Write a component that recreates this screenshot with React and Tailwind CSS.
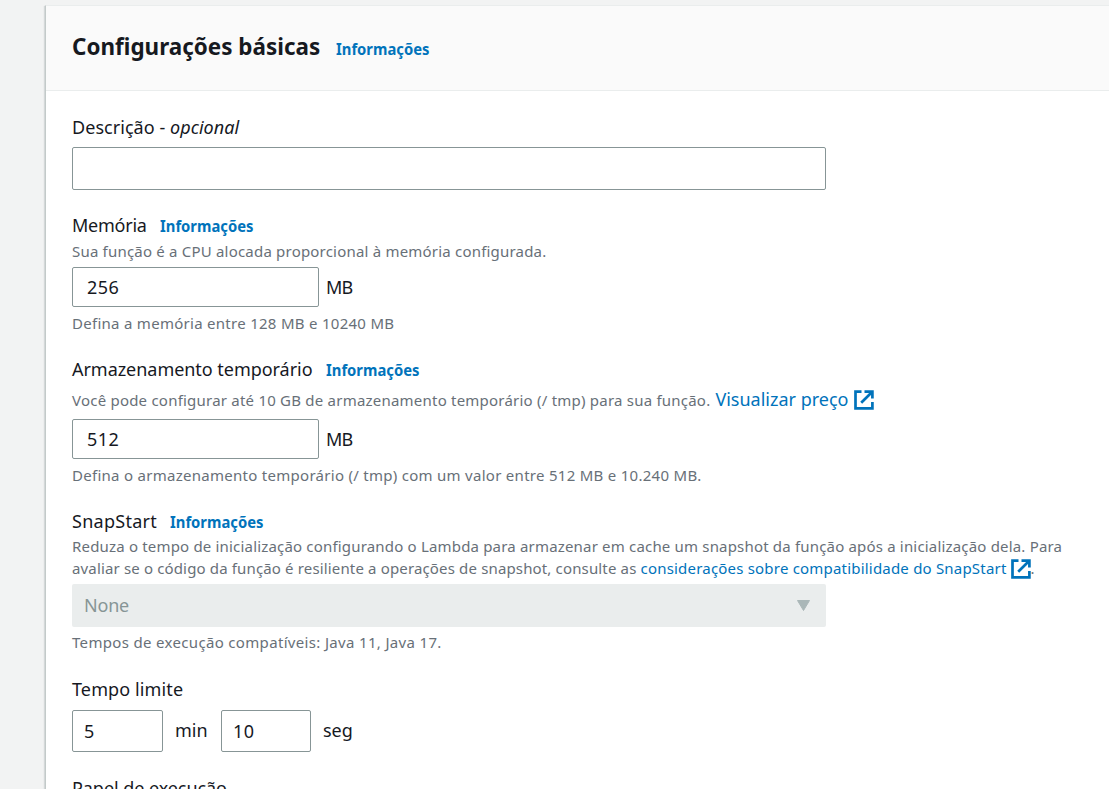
const Info = ({ className = "" }) => (
  <a className={`-mr-2 inline-block origin-left scale-x-[0.925] font-bold text-[#0073bb] text-[16px] leading-[25px] whitespace-nowrap ${className}`}>Informações</a>
);
const Label = ({ children, className = "" }) => (
  <div className={`flex h-[25px] items-center gap-[13px] leading-[25px] whitespace-nowrap ${className}`}>{children}</div>
);
const Hint = ({ children, className = "" }) => (
  <p className={`text-[#687078] text-[15px] leading-[22px] whitespace-nowrap ${className}`}>{children}</p>
);
const External = ({ className = "" }) => (
  <svg viewBox="0 0 20 20" className={`inline-block h-5 w-5 shrink-0 ${className}`} fill="none" stroke="currentColor" strokeWidth="2.7">
    <path d="M7.5 1.6H1.5V18.4H18.4V12M10.5 1.6H18.4V8.5M17.8 2.2L7.2 12.8" />
  </svg>
);
const Field = ({ className = "", children }) => (
  <div className={`flex shrink-0 items-center rounded-[2px] border border-[#879596] bg-white text-[18px] tracking-[0.4px] ${className}`}>{children}</div>
);

export default function App() {
  return (
    <div className="h-[789px] w-[1109px] overflow-hidden bg-[#f2f3f3] pl-[45px] pt-[5px] font-['Noto_Sans',sans-serif] text-[18px] text-[#16191f]">
      <main className="h-[900px] border-l border-t border-l-[#c3cac9] border-t-[#eaeded] bg-white shadow-[-1px_1px_1px_rgba(0,28,36,0.12)]">
        <header className="flex h-[85px] items-center gap-4 border-b border-[#eaeded] bg-[#fafafa] pl-[26px]">
          <h2 className="-mt-[5px] -mr-[17px] origin-left scale-x-[0.935] text-[24px] font-bold whitespace-nowrap">Configurações básicas</h2>
          <Info className="mt-[2px]" />
        </header>
        <section className="flex flex-col pl-[26px] pt-[24px]">
          <Label><span className="tracking-[0.05px]">Descrição - <em>opcional</em></span></Label>
          <Field className="mt-[7px] h-[43px] w-[754px]" />

          <Label className="mt-[23px]"><span className="tracking-[-0.25px]">Memória</span><Info className="mt-[2px]" /></Label>
          <Hint className="mt-[2px] tracking-[0.2px]">Sua função é a CPU alocada proporcional à memória configurada.</Hint>
          <div className="mt-[5px] flex items-center gap-[7px]"><Field className="h-[40px] w-[247px] pl-[14px]">256</Field><span className="tracking-[-0.8px]">MB</span></div>
          <Hint className="mt-[5px] tracking-[0.28px]">Defina a memória entre 128 MB e 10240 MB</Hint>

          <Label className="mt-[23px]"><span className="tracking-[-0.04px]">Armazenamento temporário</span><Info className="mt-[2px]" /></Label>
          <div className="mt-[5px] flex h-[26px] items-center">
            <Hint className="tracking-[0.22px]">Você pode configurar até 10 GB de armazenamento temporário (/ tmp) para sua função.</Hint>
            <a className="-mt-[2px] ml-[5px] flex items-center gap-[6px] leading-[24px] text-[#0073bb]"><span>Visualizar preço</span><External className="mt-px" /></a>
          </div>
          <div className="mt-[6px] flex items-center gap-[7px]"><Field className="h-[40px] w-[247px] pl-[14px]">512</Field><span className="tracking-[-0.8px]">MB</span></div>
          <Hint className="mt-[5px] tracking-[0.28px]">Defina o armazenamento temporário (/ tmp) com um valor entre 512 MB e 10.240 MB.</Hint>

          <Label className="mt-[23px]"><span className="tracking-[0.27px]">SnapStart</span><Info className="mt-[2px]" /></Label>
          <Hint className="mt-[1px] tracking-[0.18px]">Reduza o tempo de inicialização configurando o Lambda para armazenar em cache um snapshot da função após a inicialização dela. Para</Hint>
          <div className="flex h-[22px] items-center">
            <Hint className="tracking-[0.15px]">avaliar se o código da função é resiliente a operações de snapshot, consulte as</Hint>
            <a className="ml-1 flex items-center gap-1 text-[#0073bb]"><span className="text-[15px] leading-[22px] tracking-[0.2px] whitespace-nowrap">considerações sobre compatibilidade do SnapStart</span><External className="mt-px" /></a>
            <Hint>.</Hint>
          </div>
          <div className="mt-[5px] flex h-[43px] w-[754px] items-center justify-between rounded-[2px] bg-[#eaeded] pl-3 pr-[16px] text-[#879596]">
            <span className="tracking-[-0.2px]">None</span>
            <svg viewBox="0 0 13 11" className="h-[11px] w-[13px]" fill="#aab7b8" stroke="#aab7b8" strokeLinejoin="round"><path d="M.5 .5H12.5L6.5 10.5Z" /></svg>
          </div>
          <Hint className="mt-[4px] tracking-[0.33px]">Tempos de execução compatíveis: Java 11, Java 17.</Hint>

          <Label className="mt-[24px]"><span className="tracking-[0.12px]">Tempo limite</span></Label>
          <div className="mt-[8px] flex items-center">
            <Field className="h-[42px] w-[91px] pl-[11px]">5</Field>
            <span className="-mt-[2px] ml-3 w-[46px]">min</span>
            <Field className="h-[42px] w-[90px] pl-[11px]">10</Field>
            <span className="-mt-[2px] ml-3">seg</span>
          </div>
          <Label className="mt-[24px]"><span className="tracking-[-0.06px]">Papel de execução</span></Label>
        </section>
      </main>
    </div>
  );
}
